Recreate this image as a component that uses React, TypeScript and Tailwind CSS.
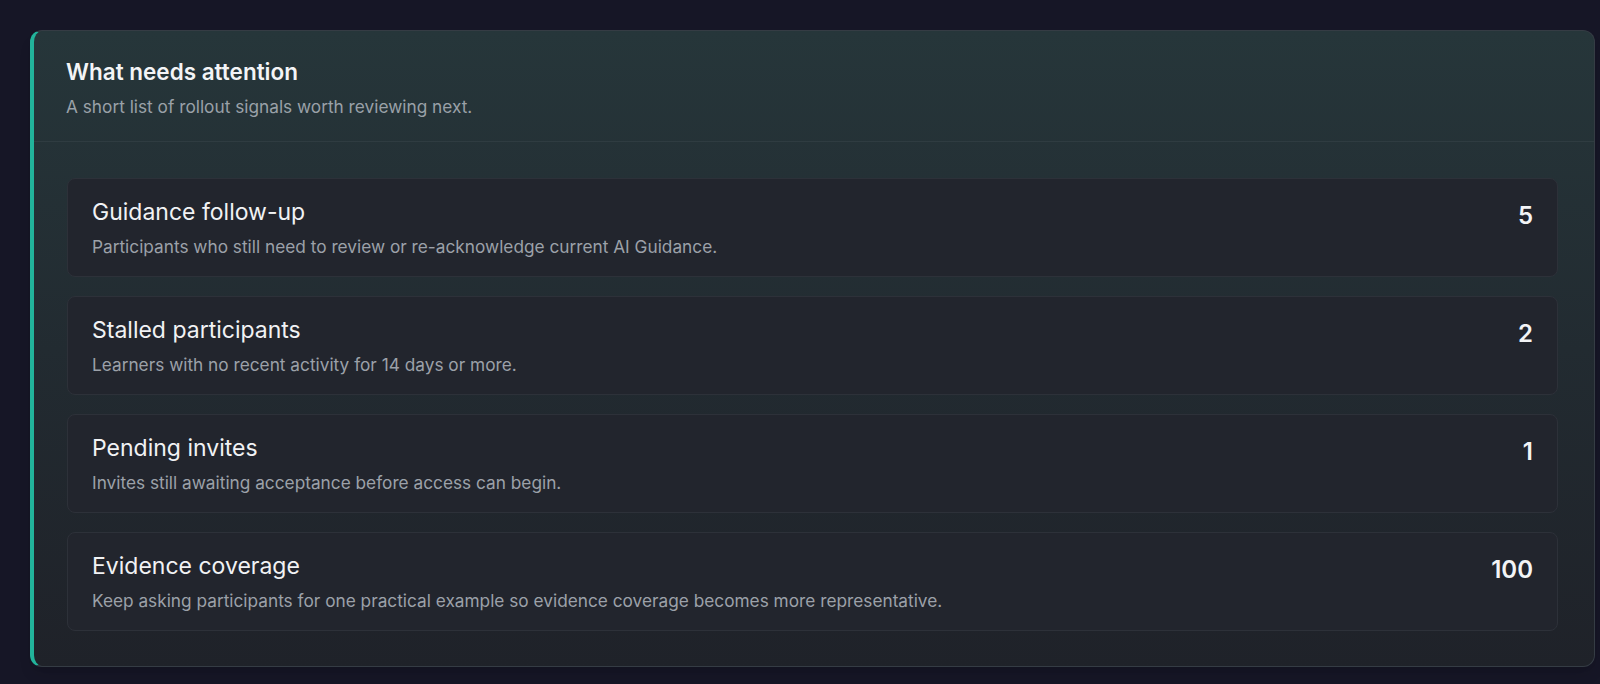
import React from "react";

const items = [
  {
    title: "Guidance follow-up",
    desc: "Participants who still need to review or re-acknowledge current AI Guidance.",
    value: "5",
  },
  {
    title: "Stalled participants",
    desc: "Learners with no recent activity for 14 days or more.",
    value: "2",
  },
  {
    title: "Pending invites",
    desc: "Invites still awaiting acceptance before access can begin.",
    value: "1",
  },
  {
    title: "Evidence coverage",
    desc: "Keep asking participants for one practical example so evidence coverage becomes more representative.",
    value: "100",
  },
];

export default function App() {
  return (
    <div
      className="h-[684px] w-full bg-[#161626] pt-[30px] pl-[30px] pr-[5px] overflow-hidden"
      style={{ fontFamily: "Inter, 'Noto Sans', sans-serif" }}
    >
      <div className="rounded-xl border border-[#353c44] border-l-4 border-l-[#22b39b] bg-gradient-to-b from-[#26363a] via-[#222b31] to-[#1f2229] shadow-lg">
        <div className="pl-[32px] pr-9 pt-[26px] pb-[22px] border-b border-[#2f3c41]">
          <h2 className="text-[22.5px] leading-[30px] font-semibold text-[#f3f4f6]">
            What needs attention
          </h2>
          <p className="mt-2 text-[17.25px] leading-[24px] text-[#9aa1a8]">
            A short list of rollout signals worth reviewing next.
          </p>
        </div>
        <div className="pl-[33px] pr-9 pt-[36px] pb-[35px] flex flex-col gap-[19px]">
          {items.map((it) => (
            <div
              key={it.title}
              className="h-[99px] rounded-lg border border-[#2d3139] bg-[#22252d] pl-6 pr-6 pt-[18px] flex justify-between"
            >
              <div>
                <div className="text-[23px] leading-[30px] font-normal text-[#f1f2f4]">
                  {it.title}
                </div>
                <div className="mt-2 text-[17.25px] leading-[24px] text-[#9ca1a9]">
                  {it.desc}
                </div>
              </div>
              <div className="text-[24px] leading-[38px] font-semibold text-[#f3f4f6]">
                {it.value}
              </div>
            </div>
          ))}
        </div>
      </div>
    </div>
  );
}
